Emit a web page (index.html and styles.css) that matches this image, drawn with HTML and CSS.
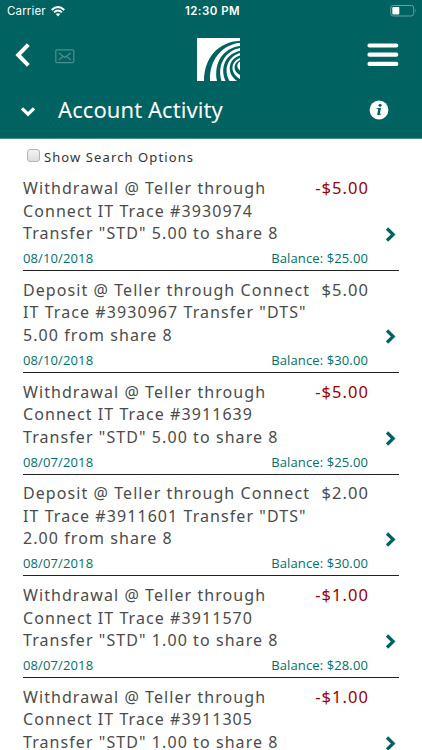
FILE: index.html
```html
<!DOCTYPE html>
<html lang="en">
<head>
<meta charset="utf-8">
<title>Account Activity</title>
<link rel="stylesheet" href="styles.css">
</head>
<body>
<header class="header">
  <div class="status">
    <div class="carrier"><span>Carrier</span>
      <svg class="wifi" width="14" height="11" viewBox="0 0 14 11" fill="none" stroke="#fff" stroke-width="1.9"><path d="M.7 4Q7-1.8 13.3 4M3 6.4Q7 2.8 11 6.4"/><path d="M4.8 8.1Q7 6.2 9.2 8.1L7 10.4Z" fill="#fff" stroke="none"/></svg>
    </div>
    <span class="clock">12:30 PM</span>
    <svg class="battery" width="27" height="12" viewBox="0 0 27 12"><rect x=".7" y=".5" width="23" height="10.5" rx="2.5" fill="none" stroke="#6ba09f"/><rect x="2.3" y="2.1" width="7" height="7.3" rx=".8" fill="#fff"/><path d="M25 4Q26.5 5.7 25 7.5Z" fill="#6ba09f"/></svg>
  </div>
  <div class="nav">
    <svg class="back" width="16" height="24" viewBox="0 0 16 24" fill="none" stroke="#fff" stroke-width="4"><path d="M13.300 1.700 3.200 12 13.300 22.300"/></svg>
    <svg class="mail" width="20" height="15" viewBox="0 0 20 15" fill="none" stroke="#4b9090" stroke-width="1.2"><rect x=".8" y=".9" width="18" height="12.8" rx="1.2"/><path d="M3.8 4 9.8 8.6 15.8 4M3.8 11 7.8 7.6M15.8 11 11.8 7.6"/></svg>
    <svg class="logo" width="43" height="43" viewBox="0 0 43 43"><path fill="#fff" d="M0 0H43V43H0Z"/><g fill="#006261"><path d="M43 2.800C22 4 7 19 7 43H13C12 23 24 7 43 4.800Z"/><path d="M43 8C26 10 16.500 25 20 43H24.500C20 27 28 13 43 10Z"/><path d="M43 12.800C29 16 22.500 29 28.500 43H32.500C26 31 31 18.500 43 15Z"/><path d="M43 17.500C31 21 29 35 40 43H43V41C33 35 33 24 43 20Z"/><path d="M43 22C35.500 25 36 34 43 37V32.500C39.500 30 39.500 25.500 43 23.500Z"/></g></svg>
    <svg class="menu" width="32" height="24" viewBox="0 0 32 24" stroke="#fff" stroke-width="4.200" stroke-linecap="round"><path d="M2.500 2.500H29.300M2.500 11.700H29.300M2.500 20.900H29.300"/></svg>
  </div>
  <div class="title">
    <svg class="down" width="16" height="12" viewBox="0 0 16 12" fill="none" stroke="#fff" stroke-width="3.2"><path d="M2 2.300 8 8.200 14 2.300"/></svg>
    <h1>Account Activity</h1>
    <svg class="info" width="20" height="20" viewBox="0 0 20 20"><circle cx="10" cy="10" r="9.400" fill="#fff"/><g fill="#006261"><circle cx="11.100" cy="5.300" r="1.500"/><path d="M7.600 8.200 12 7.700 10.800 13.400Q10.700 14 12.300 13.400L12.200 14.200Q8 16.300 8.300 13.900L9.200 9.200 7.500 8.900Z"/></g></svg>
  </div>
</header>
<main>
  <label class="search"><span class="box"></span><span class="label">Show Search Options</span></label>
  <section class="list">
    <article class="row"><div class="top"><p class="desc">Withdrawal @ Teller through<br>Connect IT Trace #3930974<br>Transfer "STD" 5.00 to share 8</p><span class="amount neg">-$5.00</span></div><div class="meta"><span>08/10/2018</span><span>Balance: $25.00</span></div><svg class="go" width="12" height="15" viewBox="0 0 12 15"><path d="M2 1.500 8.200 7.500 2 13.500"/></svg></article>
    <article class="row"><div class="top"><p class="desc">Deposit @ Teller through Connect<br>IT Trace #3930967 Transfer "DTS"<br>5.00 from share 8</p><span class="amount">$5.00</span></div><div class="meta"><span>08/10/2018</span><span>Balance: $30.00</span></div><svg class="go" width="12" height="15" viewBox="0 0 12 15"><path d="M2 1.500 8.200 7.500 2 13.500"/></svg></article>
    <article class="row"><div class="top"><p class="desc">Withdrawal @ Teller through<br>Connect IT Trace #3911639<br>Transfer "STD" 5.00 to share 8</p><span class="amount neg">-$5.00</span></div><div class="meta"><span>08/07/2018</span><span>Balance: $25.00</span></div><svg class="go" width="12" height="15" viewBox="0 0 12 15"><path d="M2 1.500 8.200 7.500 2 13.500"/></svg></article>
    <article class="row"><div class="top"><p class="desc">Deposit @ Teller through Connect<br>IT Trace #3911601 Transfer "DTS"<br>2.00 from share 8</p><span class="amount">$2.00</span></div><div class="meta"><span>08/07/2018</span><span>Balance: $30.00</span></div><svg class="go" width="12" height="15" viewBox="0 0 12 15"><path d="M2 1.500 8.200 7.500 2 13.500"/></svg></article>
    <article class="row"><div class="top"><p class="desc">Withdrawal @ Teller through<br>Connect IT Trace #3911570<br>Transfer "STD" 1.00 to share 8</p><span class="amount neg">-$1.00</span></div><div class="meta"><span>08/07/2018</span><span>Balance: $28.00</span></div><svg class="go" width="12" height="15" viewBox="0 0 12 15"><path d="M2 1.500 8.200 7.500 2 13.500"/></svg></article>
    <article class="row"><div class="top"><p class="desc">Withdrawal @ Teller through<br>Connect IT Trace #3911305<br>Transfer "STD" 1.00 to share 8</p><span class="amount neg">-$1.00</span></div><svg class="go" width="12" height="15" viewBox="0 0 12 15"><path d="M2 1.500 8.200 7.500 2 13.500"/></svg></article>
  </section>
</main>
</body>
</html>
```
FILE: styles.css
```css
* { box-sizing: border-box; }
body {
  margin: 0;
  height: 750px;
  overflow: hidden;
  background: #fff;
  font-family: "Open Sans", "Noto Sans", sans-serif;
  color: #4b4b4b;
}
svg { display: block; flex: none; }
.header { height: 139px; background: #006261; border-bottom: 1px solid #4b8e8d; color: #fff; }
.status {
  height: 22px;
  padding: 0 6px 0 7px;
  display: grid;
  grid-template-columns: 1fr auto 1fr;
  align-items: center;
  font: 11.5px/22px Inter, sans-serif;
}
.carrier { display: flex; align-items: center; gap: 5px; letter-spacing: .15px; }
.clock { font-weight: 600; letter-spacing: .45px; margin-left: 2px; }
.battery { justify-self: end; margin-right: -1px; }
.nav { height: 66px; display: flex; align-items: center; padding: 0 23px 0 15px; }
.mail { margin-left: 24px; margin-top: 3px; }
.logo { margin-left: 122px; margin-top: 8px; }
.menu { margin-left: auto; }
.title { height: 50px; padding: 0 33px 0 20px; display: flex; align-items: center; }
.title h1 { margin: -8px 0 0 22px; font-family: "Noto Sans", sans-serif; font-size: 22px; line-height: 30px; font-weight: 400; letter-spacing: .08px; white-space: nowrap; }
.info { margin: -6px 0 0 auto; }
.down { margin-top: -2px; }
.search { height: 31px; margin-left: 27px; padding-top: 7px; display: flex; align-items: flex-start; gap: 4px; }
.box { width: 13px; height: 13px; margin-top: 3px; border: 1px solid #b4b4b4; border-radius: 3px; background: linear-gradient(#f2f2f2, #dedede); }
.label { font-family: "Noto Sans", sans-serif; font-size: 13px; line-height: 22px; letter-spacing: 1.1px; color: #333; white-space: nowrap; }
.list { margin: 0 23px; }
.row { position: relative; height: 101.75px; padding: 7px 31px 0 0; }
.row::after { content: ""; display: block; margin-right: -31px; border-bottom: 1px solid #222; }
.top { height: 67.5px; display: flex; justify-content: space-between; font-family: "Noto Sans", sans-serif; }
.desc { margin: 0; font-size: 16px; line-height: 22.5px; letter-spacing: 1.07px; white-space: nowrap; }
.amount { font-size: 16.5px; line-height: 22.5px; letter-spacing: 1.05px; margin-right: -1px; }
.neg { color: #900; }
.meta { height: 25.5px; display: flex; justify-content: space-between; padding-top: 3.7px; font-size: 13px; line-height: 20px; letter-spacing: .12px; color: #00706a; }
.go { position: absolute; right: 2px; top: 57px; fill: none; stroke: #006261; stroke-width: 3.2; }
```
